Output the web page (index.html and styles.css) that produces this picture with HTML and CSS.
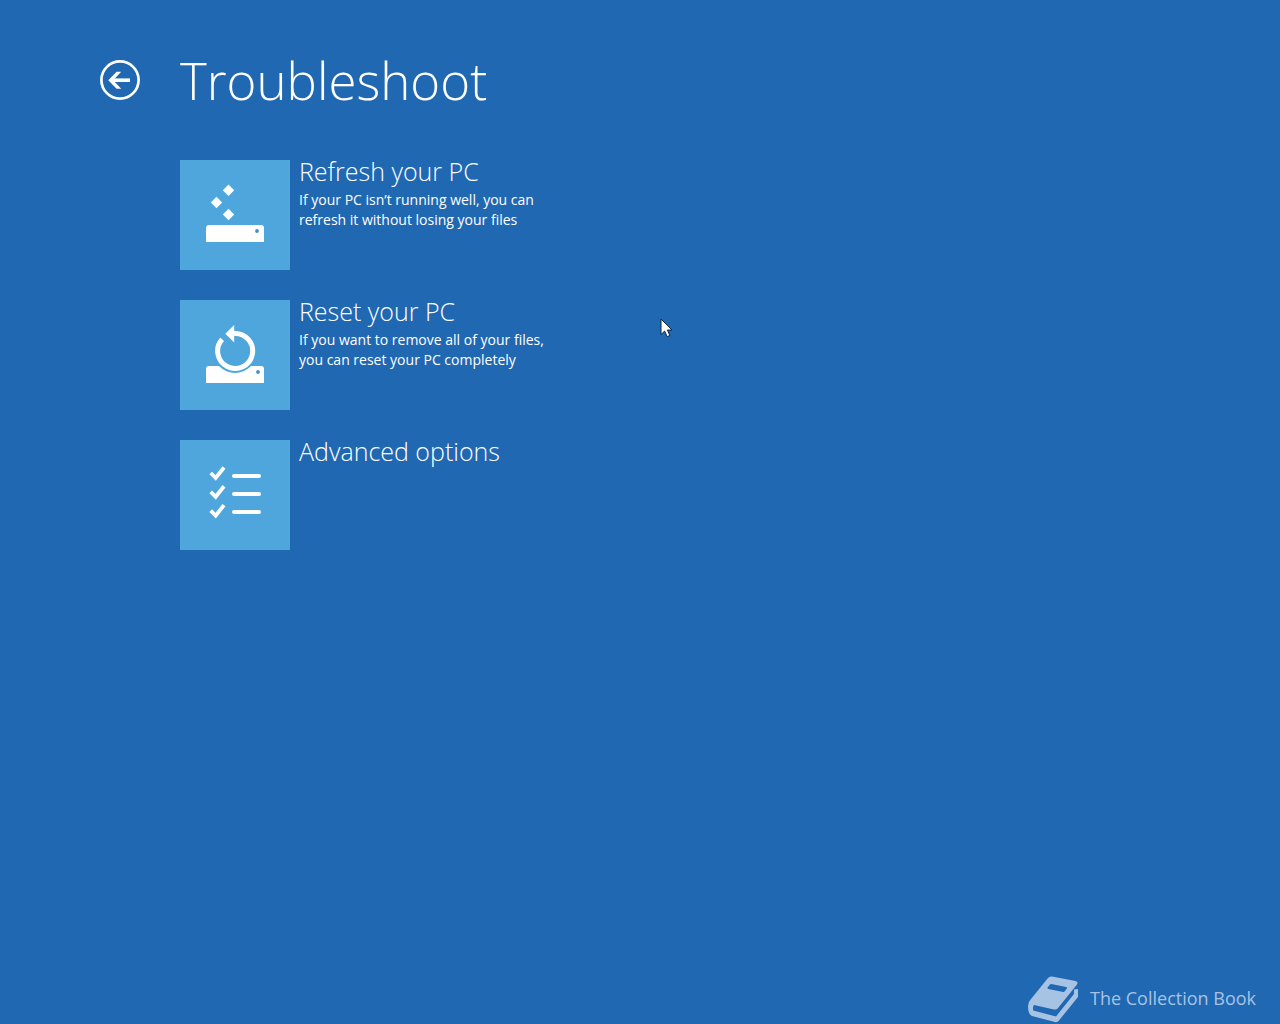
FILE: index.html
```html
<!DOCTYPE html>
<html lang="en">
  <head>
    <meta charset="utf-8">
    <title>Troubleshoot</title>
    <link rel="stylesheet" href="styles.css">
  </head>

  <body>
    <header class="header">
      <button type="button" class="back" aria-label="Back">
        <svg width="40" height="40" viewBox="0 0 40 40" fill="none" stroke="#fff">
          <circle cx="20" cy="20" r="18.6" stroke-width="2.7"/>
          <path d="M30 20.2H11" stroke-width="3.6"/>
          <path d="M21.2 11.800H16.6L8.300 20.2L16.6 28.700H21.2L13.200 20.2Z" fill="#fff" stroke="none"/>
        </svg>
      </button>
      <h1 class="title">Troubleshoot</h1>
    </header>

    <main class="options">
      <button type="button" class="option">
        <span class="tile">
          <svg width="110" height="110" viewBox="0 0 110 110" fill="#fff">
            <path d="M48.5 24.5l5.7 5.8-5.7 5.8-5.7-5.8zM36.5 36.7l5.7 5.8-5.7 5.8-5.7-5.8zM48.5 48.7l5.7 5.8-5.7 5.8-5.7-5.8z"/>
            <path d="M26 82V68q0-3 3-3h52q3 0 3 3v14z"/>
            <circle cx="77" cy="71" r="1.9" fill="#4790c4"/>
          </svg>
        </span>
        <span class="text">
          <span class="name">Refresh your PC</span>
          <span class="desc">If your PC isn’t running well, you can<br>refresh it without losing your files</span>
        </span>
      </button>

      <button type="button" class="option">
        <span class="tile">
          <svg width="110" height="110" viewBox="0 0 110 110" fill="#fff">
            <path d="M26 83V69q0-3 3-3h52q3 0 3 3v14z"/>
            <circle cx="78" cy="72" r="1.9" fill="#4790c4"/>
            <circle cx="55" cy="51" r="22" fill="#4ea6dc"/>
            <path d="M42.2 39.2A17.5 17.5 0 1 0 54 33.5" fill="none" stroke="#fff" stroke-width="5"/>
            <path d="M54.2 25v17.4L45.3 33.7z"/>
          </svg>
        </span>
        <span class="text">
          <span class="name">Reset your PC</span>
          <span class="desc">If you want to remove all of your files,<br>you can reset your PC completely</span>
        </span>
      </button>

      <button type="button" class="option">
        <span class="tile">
          <svg width="110" height="110" viewBox="0 0 110 110" fill="none" stroke="#fff">
            <path d="M30.700 33l5 5L44 27.500M30.700 51.800l5 5L44 46.300M30.700 70.600l5 5L44 65.100" stroke-width="3.8"/>
            <path d="M54 36h25M54 54h25M54 72h25" stroke-width="4" stroke-linecap="round"/>
          </svg>
        </span>
        <span class="text">
          <span class="name">Advanced options</span>
        </span>
      </button>
    </main>

    <footer class="footer">
      <svg width="52" height="48" viewBox="0 0 52 48">
        <path d="M24 0.500L47.500 5Q50.500 6 49 8.500L30 32Q28.500 34 26 33.500L6 29Q4.500 30.500 5.200 34.500L28 40.500L46 18V13.500L50 13V21L30.500 45Q29 46.500 27 46L4 40Q0 38 0 30Q0 26 3 23L20 2Q21.500 0 24 0.500Z" fill="#a6c3e4"/>
        <path d="M23 9L38 12L35.500 15L20.500 12Z" fill="#2068b2" stroke="#2068b2" stroke-width="2" stroke-linejoin="round"/>
      </svg>
      <span class="brand">The Collection Book</span>
    </footer>

    <!-- mouse pointer -->
    <svg class="pointer" width="14" height="21" viewBox="0 0 14 21">
      <path d="M1 1v15.500l3.600-3.400 2.600 5.600 2.700-1.200-2.500-5.500H12z" fill="#fff" stroke="#10243f"/>
    </svg>
  </body>
</html>
```

FILE: styles.css
```css
* {
  box-sizing: border-box;
}

body {
  margin: 0;
  min-height: 100vh;
  display: flex;
  flex-direction: column;
  background-color: #2068b2;
  color: white;
  font-family: "Open Sans", "Noto Sans", sans-serif;
}

button {
  padding: 0;
  border: none;
  background: none;
  color: inherit;
  font: inherit;
  text-align: left;
  cursor: pointer;
}

svg {
  display: block;
}

.header {
  display: flex;
  align-items: center;
  gap: 40px;
  padding: 40px 100px 0;
}

.title {
  margin: 0;
  font-size: 51px;
  font-weight: 300;
  line-height: 80px;
}

.options {
  display: flex;
  flex-direction: column;
  align-items: flex-start;
  gap: 30px;
  padding: 40px 40px 40px 180px;
}

.option {
  display: flex;
  align-items: flex-start;
  gap: 9px;
}

.tile {
  flex: none;
  background-color: #4ea6dc;
}

.name {
  display: block;
  font-size: 25px;
  font-weight: 300;
  line-height: 22px;
}

.desc {
  display: block;
  padding-top: 8px;
  font-size: 14px;
  line-height: 20px;
}

.footer {
  display: flex;
  align-items: center;
  justify-content: flex-end;
  gap: 10px;
  margin-top: auto;
  padding-right: 24px;
  color: #a6c3e4;
  font-size: 18px;
}

.brand {
  padding-bottom: 4px;
}

.pointer {
  position: absolute;
  left: 660px;
  top: 318px;
}
```
